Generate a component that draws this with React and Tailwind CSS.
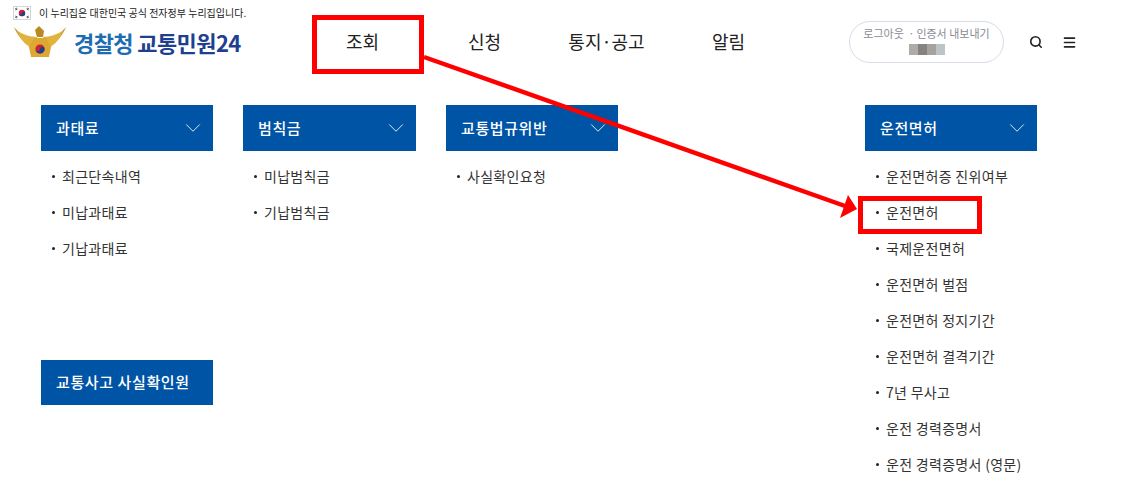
import { ChevronDown, Search, Menu } from "lucide-react";

const columns = [
    { title: "과태료", items: ["최근단속내역", "미납과태료", "기납과태료"] },
    { title: "범칙금", items: ["미납범칙금", "기납범칙금"] },
    { title: "교통법규위반", items: ["사실확인요청"] },
    {
        title: "운전면허",
        items: [
            "운전면허증 진위여부",
            "운전면허",
            "국제운전면허",
            "운전면허 벌점",
            "운전면허 정지기간",
            "운전면허 결격기간",
            "7년 무사고",
            "운전 경력증명서",
            "운전 경력증명서 (영문)",
        ],
    },
];

function Emblem() {
    return (
        <svg width="54" height="32" viewBox="0 0 54 32">
            <path d="M1 1 C5 11 11 17 19 20 L19 15 C13 12 7 8 1 1Z" fill="#c9962a" />
            <path d="M53 1 C49 11 43 17 35 20 L35 15 C41 12 47 8 53 1Z" fill="#c9962a" />
            <path d="M4 5 C8 15 14 20 20 23 L24 11 C17 11 10 8 4 5Z" fill="#e3b23c" />
            <path d="M50 5 C46 15 40 20 34 23 L30 11 C37 11 44 8 50 5Z" fill="#e3b23c" />
            <path d="M26 0 L31 5 L30 11 L24 11 L22 4Z" fill="#b98a22" />
            <path d="M21 12 H33 L38 21 L36 31 H18 L16 21Z" fill="#dba832" />
            <circle cx="27" cy="23" r="4.6" fill="#d0202c" />
            <path d="M22.4 23 A4.6 4.6 0 0 0 31.6 23 A2.3 2.3 0 0 0 27 23 A2.3 2.3 0 0 1 22.4 23Z" fill="#1f3f8f" />
        </svg>
    );
}

function Flag() {
    return (
        <div className="flex h-[14px] w-[18px] items-center justify-center border border-gray-300 bg-white">
            <svg width="16" height="12" viewBox="0 0 16 12">
                <circle cx="8" cy="6" r="3.2" fill="#d0202c" />
                <path d="M4.8 6 A3.2 3.2 0 0 0 11.2 6 A1.6 1.6 0 0 0 8 6 A1.6 1.6 0 0 1 4.8 6Z" fill="#1f3f8f" />
                <path d="M1 2 L3 1 M1.5 3 L3.5 2 M13 1 L15 2 M12.5 2 L14.5 3 M1 10 L3 11 M1.5 9 L3.5 10 M13 11 L15 10 M12.5 10 L14.5 9" stroke="#333" strokeWidth="0.8" />
            </svg>
        </div>
    );
}

function Header() {
    return (
        <header className="flex h-[105px]">
            <div className="w-[302px] pl-[13px] pt-[5px]">
                <div className="flex h-[15px] items-center gap-2">
                    <Flag />
                    <span className="text-[10px] text-[#222]">이 누리집은 대한민국 공식 전자정부 누리집입니다.</span>
                </div>
                <div className="mt-[5px] flex items-center gap-[7px]">
                    <Emblem />
                    <span className="whitespace-nowrap text-[22px] leading-[34px] font-bold tracking-[-0.6px]">
                        <span className="text-[#1e6db0]">경찰청</span>{" "}
                        <span className="text-[#1f3f8f]">교통민원24</span>
                    </span>
                </div>
            </div>
            <nav className="flex h-[82px] w-[488px] items-center text-[18px] text-[#222]">
                {["조회", "신청", "통지·공고", "알림"].map((name) => (
                    <a key={name} className="w-[122px] pr-[1px] text-center">
                        {name}
                    </a>
                ))}
            </nav>
            <div className="ml-[59px] mt-[21px] flex h-[42px] w-[155px] flex-col items-center rounded-full border border-[#d8dce8] pt-[3px]">
                <span className="text-[11px] leading-[16px] text-[#8a8a94]">로그아웃 ㆍ인증서 내보내기</span>
                <div className="mt-[3px] flex h-[11px]">
                    <span className="w-[9px] bg-[#aeaca9]" />
                    <span className="w-[9px] bg-[#85827f]" />
                    <span className="w-[9px] bg-[#a5a3a0]" />
                    <span className="w-[9px] bg-[#bcc4c6]" />
                </div>
            </div>
            <div className="mt-[35px] ml-[25px] flex h-[14px] items-center gap-[19px] text-[#222]">
                <Search size={14} strokeWidth={2.8} />
                <Menu size={15} strokeWidth={2.6} />
            </div>
        </header>
    );
}

function MenuPanel({ title, arrow, tall }) {
    return (
        <div
            className={`flex items-center justify-between bg-[#0054a5] pl-[15px] pr-[7px] text-[15px] font-medium tracking-[0.6px] text-white ${
                tall ? "h-[46px]" : "h-[45px]"
            }`}
        >
            <span>{title}</span>
            {arrow && <ChevronDown size={26} strokeWidth={0.8} />}
        </div>
    );
}

function Annotations() {
    return (
        <>
            <div className="absolute left-[312px] top-[15px] h-[59px] w-[112px] border-[5px] border-[#ff0000]" />
            <div className="absolute left-[858px] top-[196px] h-[38px] w-[124px] border-[5px] border-[#ff0000]" />
            <svg className="absolute left-0 top-0" width="1144" height="498">
                <line x1="424" y1="57" x2="845" y2="206" stroke="#ff0000" strokeWidth="4.5" />
                <path d="M857 209 L840 218 L848 195Z" fill="#ff0000" />
            </svg>
        </>
    );
}

export default function App() {
    return (
        <div className="relative h-[498px] w-[1144px] overflow-hidden bg-white font-['Noto_Sans_CJK_KR',sans-serif]">
            <Header />
            <div className="grid grid-cols-[202px_203px_419px_172px] pl-[41px]">
                {columns.map((col, i) => (
                    <div key={col.title} className={i === 1 ? "w-[173px]" : "w-[172px]"}>
                        <MenuPanel title={col.title} arrow tall />
                        <ul className="mt-[7px]">
                            {col.items.map((item) => (
                                <li
                                    key={item}
                                    className="flex h-[36px] items-center whitespace-nowrap text-[14px] tracking-[0.3px] text-[#333]"
                                >
                                    <span className="ml-[11px] mr-[7px] h-[3px] w-[3px] shrink-0 rounded-full bg-[#222]" />
                                    {item}
                                </li>
                            ))}
                        </ul>
                        {i === 0 && (
                            <div className="mt-[94px]">
                                <MenuPanel title="교통사고 사실확인원" />
                            </div>
                        )}
                    </div>
                ))}
            </div>
            <Annotations />
        </div>
    );
}
